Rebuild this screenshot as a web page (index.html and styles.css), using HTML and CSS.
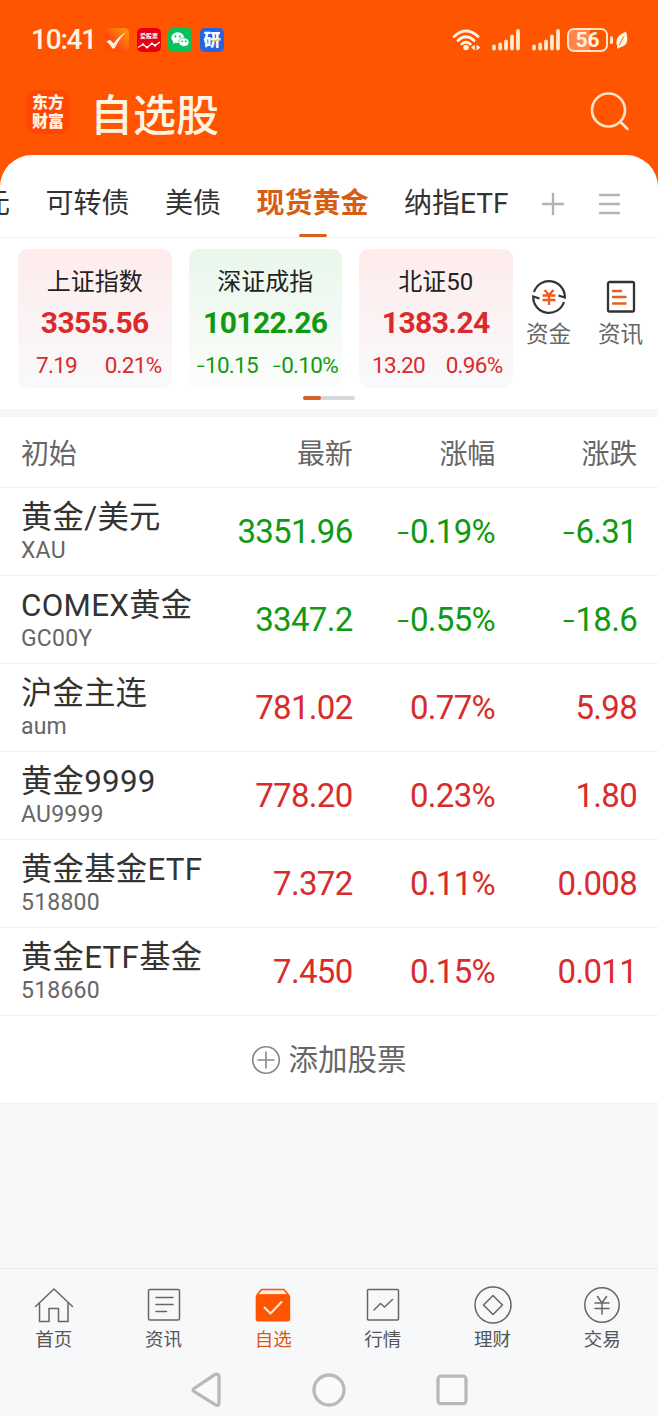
FILE: index.html
```html
<!doctype html>
<html lang="zh-CN">
<head>
    <meta charset="UTF-8">
    <title>自选股</title>
    <link rel="stylesheet" href="styles.css">
</head>
<body>
<div class="page">
    <div class="top">
        <div class="status">
            <span class="clock">10:41</span>
            <div class="apps">
                <svg width="24" height="24" viewBox="0 0 24 24">
                    <defs><linearGradient id="g1" x1="1" y1="0" x2="0" y2="1"><stop offset="0" stop-color="#ff9d0a"/><stop offset=".6" stop-color="#ff5010"/><stop offset="1" stop-color="#ff4800"/></linearGradient></defs>
                    <rect width="24" height="24" rx="5" fill="url(#g1)"/>
                    <path d="M1.500 13.500L5 11.800L8.500 15.500Q14 8 21 4Q14 11 9.500 20.500H7.500Q5 16.500 1.500 13.500Z" fill="#fff3e4"/>
                </svg>
                <svg width="24" height="24" viewBox="0 0 24 24">
                    <rect width="24" height="24" rx="5" fill="#e60012"/>
                    <text class="tiny" x="12" y="10" text-anchor="middle">爱股票</text>
                    <path d="M1 19.500L6 16.500L10 19.500L15 15.500L18 17.500L23 14" fill="none" stroke="#fff" stroke-width="1.100"/>
                    <g fill="#fff"><circle cx="6" cy="16.500" r="1.200"/><circle cx="10" cy="19.300" r="1.200"/><circle cx="15" cy="15.700" r="1.200"/><circle cx="18" cy="17.500" r="1.200"/></g>
                </svg>
                <svg width="24" height="24" viewBox="0 0 24 24">
                    <rect width="24" height="24" rx="5" fill="#07c35f"/>
                    <path d="M5 16L5.300 13.500A6.400 5.300 0 1 1 9.500 15L7.200 14.800Z" fill="#fff"/>
                    <path d="M19 19L18.500 17.800A5.200 4.300 0 1 1 20 16.700Z" fill="#fff" stroke="#07c35f" stroke-width=".7"/>
                    <g fill="#07a050"><circle cx="7.500" cy="8.500" r=".9"/><circle cx="11.700" cy="8.500" r=".9"/><circle cx="14.200" cy="13.400" r=".8"/><circle cx="17.700" cy="13.400" r=".8"/></g>
                </svg>
                <svg width="24" height="24" viewBox="0 0 24 24">
                    <rect width="24" height="24" rx="5" fill="#2563e0"/>
                    <text class="yan" x="12" y="18" text-anchor="middle">研</text>
                    <path d="M12.500 13L21 11.500" stroke="#e5c66a" stroke-width="1.500"/>
                </svg>
            </div>
            <div class="signals">
                <svg class="wifi" width="30" height="24" viewBox="0 0 30 24" fill="none" stroke="#fff3e2" stroke-width="2.800" stroke-linecap="round">
                    <path d="M2.200 8.500Q14 -2.500 26 8.500M6 12.500Q14 5 22 12.500M9.800 16Q14 12.500 18.200 16"/>
                    <circle cx="14" cy="19.500" r="2.800" fill="#fff3e2" stroke="none"/>
                    <path d="M22.800 16.500V22.500L19 19.500ZM24.500 16.500V22.500L28.500 19.500Z" fill="#fff3e2" stroke="none"/>
                </svg>
                <svg class="bars" width="28" height="22" viewBox="0 0 28 22" stroke="#ffe9cf" stroke-width="3.800" stroke-linecap="round"><path d="M2 17.500V19.500M8.200 15.500V19.500M14 12.500V19.500M20 7.500V19.500M26 2V19.500"/></svg>
                <svg class="bars" width="28" height="22" viewBox="0 0 28 22" stroke="#ffe9cf" stroke-width="3.800" stroke-linecap="round"><path d="M2 17.500V19.500M8.200 15.500V19.500M14 12.500V19.500M20 7.500V19.500M26 2V19.500"/></svg>
                <span class="battery">56</span>
                <svg class="leaf" width="12" height="18" viewBox="0 0 12 18"><path d="M10 .500Q14 13 6 15.800L3.500 16.500L2.500 17.800L1 17L1.500 15.500Q-3 6 10 .500Z" fill="#fff3e2"/><path d="M8 5.500Q5 9.500 3.500 14" fill="none" stroke="#ff5500" stroke-width=".9"/></svg>
            </div>
        </div>
        <div class="title-bar">
            <div class="logo">东方<br>财富</div>
            <h1>自选股</h1>
            <svg class="search" width="42" height="42" viewBox="0 0 42 42" fill="none" stroke="#ffe2c8" stroke-width="2.700" stroke-linecap="round"><circle cx="19.500" cy="19" r="16.500"/><path d="M31.500 31L38.500 38"/></svg>
        </div>
    </div>

    <div class="panel">
        <div class="tabs">
            <span>美元</span>
            <span>可转债</span>
            <span>美债</span>
            <span class="on">现货黄金</span>
            <span>纳指ETF</span>
            <svg class="add-tab" width="24" height="24" viewBox="0 0 24 24" stroke="#b3b3b3" stroke-width="2.400" stroke-linecap="round"><path d="M2 12H22M12 2V22"/></svg>
            <svg width="24" height="24" viewBox="0 0 24 24" stroke="#b3b3b3" stroke-width="2.300" stroke-linecap="round"><path d="M3 3H22M3 12H22M3 21H22"/></svg>
        </div>

        <div class="indices">
            <div class="card up">
                <div class="name">上证指数</div>
                <div class="price">3355.56</div>
                <div class="change"><span>7.19</span><span>0.21%</span></div>
            </div>
            <div class="card down">
                <div class="name">深证成指</div>
                <div class="price">10122.26</div>
                <div class="change"><span><i>-</i>10.15</span><span><i>-</i>0.10%</span></div>
            </div>
            <div class="card up">
                <div class="name">北证50</div>
                <div class="price">1383.24</div>
                <div class="change"><span>13.20</span><span>0.96%</span></div>
            </div>
            <div class="tool">
                <svg width="36" height="36" viewBox="0 0 36 36" fill="none" stroke="#333" stroke-width="2.200">
                    <path d="M3 13A15.800 15.800 0 0 1 33.800 18.500L27.500 16.500M33 23A15.800 15.800 0 0 1 2.200 17.500L8.500 19.500"/>
                    <path d="M13.500 11L18 16L22.500 11M11.500 16.500H24.500M11.500 21H24.500M18 16V26" stroke="#f4591c" stroke-width="2.300"/>
                </svg>
                <span>资金</span>
            </div>
            <div class="tool">
                <svg width="36" height="36" viewBox="0 0 36 36" fill="none" stroke="#333" stroke-width="2.300" stroke-linejoin="round">
                    <rect x="5" y="3" width="26" height="29.500" rx="1.500"/>
                    <path d="M10 12H18M10 18H22.500M10 24.500H22.500" stroke="#e5601e" stroke-width="2.400" stroke-linecap="round"/>
                </svg>
                <span>资讯</span>
            </div>
        </div>
        <div class="pager"><span></span></div>
    </div>

    <div class="list">
        <div class="row head"><span>初始</span><span>最新</span><span>涨幅</span><span>涨跌</span></div>
        <div class="row down">
            <div class="stock">黄金/美元<small>XAU</small></div>
            <span>3351.96</span><span><i>-</i>0.19%</span><span><i>-</i>6.31</span>
        </div>
        <div class="row down">
            <div class="stock">COMEX黄金<small>GC00Y</small></div>
            <span>3347.2</span><span><i>-</i>0.55%</span><span><i>-</i>18.6</span>
        </div>
        <div class="row up">
            <div class="stock">沪金主连<small>aum</small></div>
            <span>781.02</span><span>0.77%</span><span>5.98</span>
        </div>
        <div class="row up">
            <div class="stock">黄金9999<small>AU9999</small></div>
            <span>778.20</span><span>0.23%</span><span>1.80</span>
        </div>
        <div class="row up">
            <div class="stock">黄金基金ETF<small>518800</small></div>
            <span>7.372</span><span>0.11%</span><span>0.008</span>
        </div>
        <div class="row up">
            <div class="stock">黄金ETF基金<small>518660</small></div>
            <span>7.450</span><span>0.15%</span><span>0.011</span>
        </div>
        <div class="add">
            <svg width="30" height="30" viewBox="0 0 30 30" fill="none" stroke="#888" stroke-width="1.600"><circle cx="15" cy="15" r="13.300"/><path d="M6.500 15H23.500M15 6.500V23.500"/></svg>
            <span>添加股票</span>
        </div>
    </div>

    <div class="nav">
        <div>
            <svg width="40" height="40" viewBox="0 0 40 40"><path d="M1.500 21.500L20 4L38.500 21.500M5.500 18.500V36.500H15V23.500H24.500V36.500H34V18.500"/></svg>
            <span>首页</span>
        </div>
        <div>
            <svg width="40" height="40" viewBox="0 0 40 40"><rect x="4.500" y="4.500" width="31" height="30.500" rx="1.500"/><path d="M12 12.500H29M12 19.500H29M12 26.500H22.500"/></svg>
            <span>资讯</span>
        </div>
        <div class="on">
            <svg width="40" height="40" viewBox="0 0 40 40">
                <path d="M4 10L8.500 4.500H31L35.500 10Z" fill="#ffeadf" stroke="#ff5500"/>
                <rect x="2.700" y="9.500" width="34.500" height="27" rx="2.500" fill="#ff5500" stroke="none"/>
                <path d="M11.500 22.500L17.500 28.500L28.500 17" stroke="#ffe9d8" stroke-width="1.900"/>
            </svg>
            <span>自选</span>
        </div>
        <div>
            <svg width="40" height="40" viewBox="0 0 40 40"><rect x="4.500" y="4.500" width="31" height="30.500" rx="1"/><path d="M11 25L17.500 18.500L21.500 22L29.500 14.500"/></svg>
            <span>行情</span>
        </div>
        <div>
            <svg width="40" height="40" viewBox="0 0 40 40"><circle cx="20" cy="20" r="18"/><path d="M20 10.500L29.500 20L20 29.500L10.500 20Z"/></svg>
            <span>理财</span>
        </div>
        <div>
            <svg width="40" height="40" viewBox="0 0 40 40"><circle cx="20" cy="20" r="17.200"/><path d="M15.500 11.500L20 18L24.500 11.500M13 18H27M13 23.500H27M20 18V29"/></svg>
            <span>交易</span>
        </div>
    </div>
    <div class="sys">
        <svg width="36" height="36" viewBox="0 0 36 36"><path d="M5 16.500L25.500 2.800Q30 1 30 5V31Q30 34.500 26.500 32.800L5 19.500Q3.200 18 5 16.500Z"/></svg>
        <svg width="36" height="36" viewBox="0 0 36 36"><circle cx="18" cy="18" r="15"/></svg>
        <svg width="36" height="36" viewBox="0 0 36 36"><rect x="4" y="4.200" width="28" height="27.500" rx="3"/></svg>
    </div>
</div>
</body>
</html>
```
FILE: styles.css
```css
*{padding: 0; margin: 0; box-sizing: border-box;}
body{font-family: Roboto, "Noto Sans CJK SC", sans-serif; color: #333; background: #f7f8fa;}
svg{display: block; flex: none;}
i{font-family: Inter, sans-serif; font-style: normal; font-weight: 300; line-height: 1;}
.page{width: 658px; height: 1416px; display: flex; flex-direction: column; overflow: hidden; background: #f7f8fa;}

.top{height: 187px; flex: none; background: #ff5500; color: #fff3e2;}
.status{height: 79px; display: flex; align-items: center; padding: 0 30px 0 31px;}
.clock{width: 74px; font-size: 28px; line-height: 30px; font-weight: 500; letter-spacing: -1.200px;}
.apps{display: flex; gap: 7.500px;}
.tiny{font-size: 6px; font-weight: 700; fill: #fff;}
.yan{font-size: 17px; font-weight: 900; fill: #fff;}
.signals{display: flex; align-items: center; margin-left: auto;}
.wifi{margin-right: 10px;}
.bars{margin-right: 12px;}
.battery{position: relative; width: 41px; height: 24px; margin-left: -5px; margin-right: 8px; border: 2px solid #ffe2c8; border-radius: 7px; background: linear-gradient(90deg, #ff8549 56%, #ff5500 56%); font-size: 21px; line-height: 21px; font-weight: 700; text-align: center;}
.battery::after{content: ""; position: absolute; right: -7px; top: 6px; width: 3px; height: 8px; border-radius: 2px; background: #ffe2c8;}
.title-bar{height: 66px; display: flex; align-items: center; padding: 0 27px 0 26px;}
.logo{width: 44px; height: 44px; border-radius: 10px; background: #ff4606; font-size: 16px; line-height: 18.500px; font-weight: 900; text-align: center; padding-top: 4px;}
h1{margin-left: 20px; padding-top: 8px; font-size: 43px; line-height: 60px; font-weight: 500;}
.search{margin-left: auto;}

.panel{height: 262px; margin-top: -32px; flex: none; border-radius: 32px 32px 0 0; background: #fff; border-bottom: 8px solid #f5f6f8;}
.tabs{height: 83px; display: flex; align-items: center; gap: 35.500px; margin-left: -46px; padding-top: 16px; border-bottom: 1px solid #f1f1f1; font-size: 28px; line-height: 66px; white-space: nowrap;}
.tabs .on{position: relative; color: #d95c14; font-weight: 700;}
.tabs .on::after{content: ""; position: absolute; left: 50%; bottom: 0; width: 28px; height: 3px; margin-left: -14px; border-radius: 2px; background: #d9601f;}
.tabs .add-tab{margin-left: -3px; margin-right: -3px;}
.indices{display: flex; padding: 11px 0 0 18px;}
.card{width: 153.500px; height: 139px; flex: none; margin-right: 17px; border-radius: 10px; text-align: center;}
.card:nth-child(3){margin-right: 0;}
.card.up{background: linear-gradient(#feecec, #f9f9fb);}
.card.down{background: linear-gradient(#e9f7eb, #fcfdfc);}
.name{padding-top: 15px; font-size: 24px; line-height: 36px; color: #222;}
.price{font-size: 30px; line-height: 46px; font-weight: 700; letter-spacing: -.600px;}
.change{display: flex; justify-content: space-between; padding: 0 10px 0 18px; font-size: 22.500px; line-height: 39px; letter-spacing: -.700px;}
.card:nth-child(3) .change{padding-left: 13px;}
.down .change{padding: 0 4px 0 7px;}
.up{color: #d92b2b;}
.down{color: #109a12;}
.tool{width: 72px; flex: none; padding-top: 30px; display: flex; flex-direction: column; align-items: center; font-size: 22.500px; line-height: 39px; color: #666;}
.pager{width: 52px; height: 4px; margin: 8px auto 0; border-radius: 2px; background: #d7d8dc;}
.pager span{display: block; width: 18px; height: 4px; border-radius: 2px; background: #d4622a;}

.list{background: #fff; border-bottom: 1px solid #eff0f1;}
.row{height: 88px; display: grid; grid-template-columns: 180px 151.500px 142.500px 142px; align-items: center; padding-left: 21px; border-bottom: 1px solid #f1f1f1;}
.row > span{text-align: right; font-size: 33px; letter-spacing: -.700px; line-height: 87px;}
.row.head{height: 71px; color: #666;}
.head > span{font-size: 28px; letter-spacing: -.200px; line-height: 70px; padding-top: 3px;}
.head > span:first-child{text-align: left;}
.stock{color: #333; font-size: 31.300px; letter-spacing: .300px; line-height: 38px; white-space: nowrap;}
.stock small{display: block; font-size: 23px; letter-spacing: .200px; line-height: 27px; color: #666;}
.add{height: 87px; display: flex; align-items: center; justify-content: center; gap: 7px; font-size: 29.500px; color: #666;}
.add span{padding-bottom: 6px;}

.nav{height: 95px; flex: none; display: flex; margin-top: auto; border-top: 1px solid #ebecee;}
.nav div{flex: 1; display: flex; flex-direction: column; align-items: center; padding-top: 16px; margin-left: -1px; margin-right: 1px; font-size: 18.500px; line-height: 30px; color: #555;}
.nav svg{fill: none; stroke: #666; stroke-width: 1.500; stroke-linejoin: round; stroke-linecap: round;}
.nav div.on{color: #dd5714;}
.sys{height: 53px; flex: none; display: flex; justify-content: center; align-items: center; gap: 86.500px;}
.sys svg{fill: #fafafb; stroke: #b9b9bb; stroke-width: 3.300;}
```
